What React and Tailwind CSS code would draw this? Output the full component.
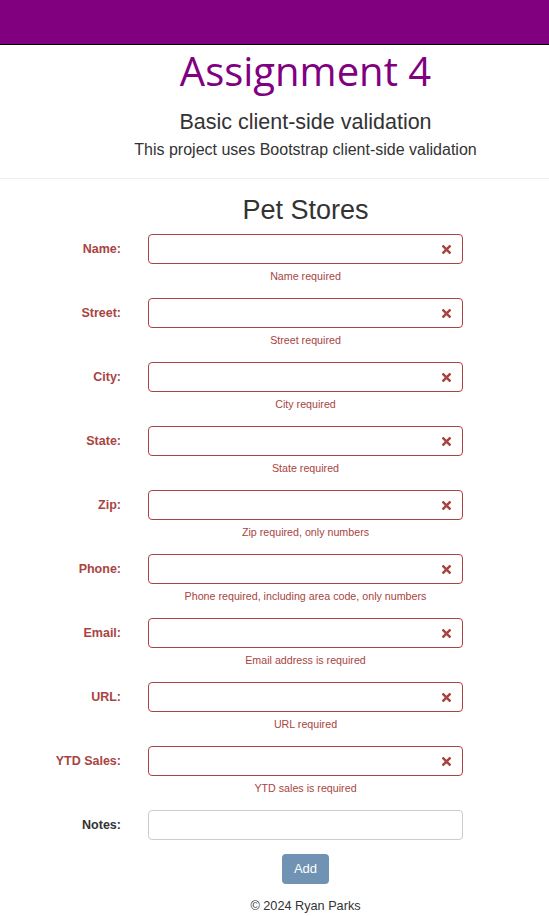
import React from 'react';

const fields = [
    { label: 'Name:', help: 'Name required' },
    { label: 'Street:', help: 'Street required' },
    { label: 'City:', help: 'City required' },
    { label: 'State:', help: 'State required' },
    { label: 'Zip:', help: 'Zip required, only numbers' },
    { label: 'Phone:', help: 'Phone required, including area code, only numbers' },
    { label: 'Email:', help: 'Email address is required' },
    { label: 'URL:', help: 'URL required' },
    { label: 'YTD Sales:', help: 'YTD sales is required' },
];

const RemoveIcon = () => (
    <svg width="9" height="9" viewBox="0 0 10 10" className="text-[#a94442]">
        <path d="M1.5 1.5 L8.5 8.5 M8.5 1.5 L1.5 8.5" stroke="currentColor" strokeWidth="2.8" strokeLinecap="square" />
    </svg>
);

const Field = ({ label, help }) => (
    <div className="grid grid-cols-[121px_315px] gap-x-[27px] mb-[13px]">
        <label className="text-right font-bold text-[12.5px] text-[#a94442] leading-[30px] whitespace-nowrap">
            {label}
        </label>
        <div>
            <div className="relative h-[30px] rounded-[4px] border border-[#a94442] bg-white">
                <span className="absolute right-[11px] top-[10px] flex">
                    <RemoveIcon />
                </span>
            </div>
            <p className="text-center text-[10.7px] text-[#a94442] leading-[18px] mt-[3px]">{help}</p>
        </div>
    </div>
);

export default function App() {
    return (
        <div className="min-h-[916px] bg-white text-[#333] font-['Liberation_Sans',Arial,sans-serif]">
            {/* top bar */}
            <div className="h-[45px] bg-[#800080] border-b border-black" />

            <div className="pl-[62px] text-center">
                <h1 className="font-['Open_Sans',sans-serif] text-[#800080] text-[40px] leading-[50px] mt-[1px]">
                    Assignment 4
                </h1>
                <h2 className="text-[21.5px] leading-[26px] mt-[13px]">Basic client-side validation</h2>
                <p className="text-[16px] leading-[20px] mt-[5px]">This project uses Bootstrap client-side validation</p>
            </div>

            <hr className="mt-[18px] border-t border-[#eee]" />

            <div className="pl-[62px] text-center">
                <h3 className="text-[27px] leading-[32px] mt-[15px] mb-[8px]">Pet Stores</h3>
            </div>

            <form>
                {fields.map((f) => (
                    <Field key={f.label} {...f} />
                ))}

                <div className="grid grid-cols-[121px_315px] gap-x-[27px]">
                    <label className="text-right font-bold text-[12.5px] text-[#333] leading-[30px]">Notes:</label>
                    <input className="h-[30px] rounded-[4px] border border-[#ccc] bg-white" />
                </div>

                <div className="pl-[62px] flex justify-center mt-[14px]">
                    <button
                        type="button"
                        className="w-[47px] h-[30px] rounded-[4px] bg-[#7092b3] text-white text-[13px]"
                    >
                        Add
                    </button>
                </div>
            </form>

            <footer className="pl-[62px] text-center text-[12.7px] leading-[16px] mt-[14px]">
                © 2024 Ryan Parks
            </footer>
        </div>
    );
}
